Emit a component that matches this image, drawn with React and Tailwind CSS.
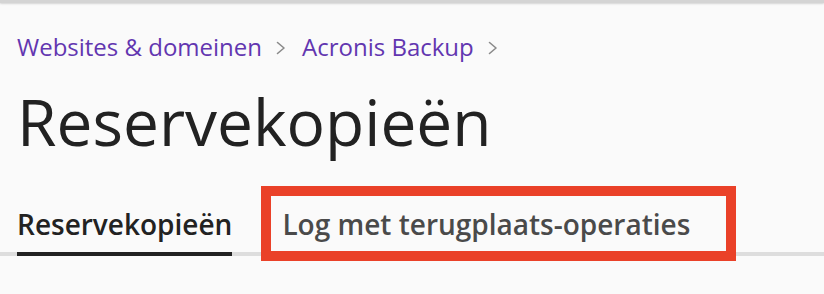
const crumbs = ["Websites & domeinen", "Acronis Backup"];

const Chevron = () => (
  <svg
    width="10"
    height="14"
    viewBox="0 0 10 14"
    fill="none"
    stroke="#8a8a8a"
    strokeWidth="1.6"
    strokeLinecap="round"
    strokeLinejoin="round"
    className="ml-[14px] mr-[16px] mt-[2px]"
  >
    <polyline points="1.5,1.5 8,7 1.5,12.5" />
  </svg>
);

const App = () => {
  return (
    <div
      className="w-[824px] h-[294px] bg-[#fafafa] overflow-hidden"
      style={{ fontFamily: '"Open Sans", "Noto Sans", sans-serif' }}
    >
      <div className="h-[3px] bg-[#d4d4d4] shadow-[0_1px_2px_rgba(0,0,0,0.15)]" />
      <div className="px-[17px]">
        <nav className="mt-[28px] flex items-center text-[24px] leading-[32px] text-[#6236b0]">
          {crumbs.map((c) => (
            <span key={c} className="flex items-center">
              <span>{c}</span>
              <Chevron />
            </span>
          ))}
        </nav>
        <h1 className="mt-[19px] text-[64px] leading-[80px] text-[#222] font-normal">
          Reservekopieën
        </h1>
      </div>
      <div className="mt-[44px] flex border-b-4 border-[#dddddd] pl-[17px]">
        <div className="-mb-[4px] border-b-4 border-[#222] pb-[10px] text-[28px] leading-[36px] font-semibold text-[#222]">
          Reservekopieën
        </div>
        <div className="relative ml-[50px] pb-[10px] text-[28px] leading-[36px] font-semibold text-[#4a4a4a]">
          Log met terugplaats-operaties
          {/* annotation box */}
          <div className="absolute left-[-21px] right-[-46px] top-[-20px] bottom-[-9px] border-[10px] border-[#ea4128]" />
        </div>
      </div>
    </div>
  );
};

export default App;
